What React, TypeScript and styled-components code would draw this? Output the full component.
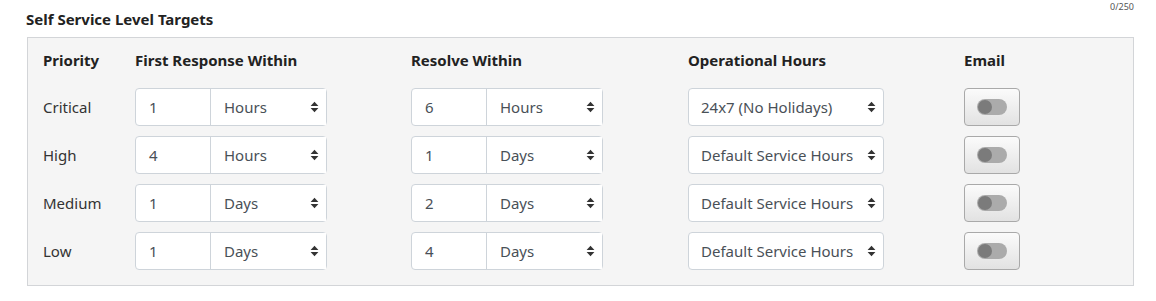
import React from "react";
import styled, { createGlobalStyle } from "styled-components";

const Global = createGlobalStyle`
  html, body { margin: 0; padding: 0; background: #fff; }
  body { font-family: "Segoe UI", "Noto Sans", "Open Sans", sans-serif; color: #212529; }
  * { box-sizing: border-box; }
`;

const Page = styled.div`
  width: 1156px;
  height: 301px;
  padding: 0 22px 0 27px;
`;

const TopBar = styled.div`
  display: flex;
  justify-content: space-between;
  align-items: flex-start;
  height: 37px;
`;

const Title = styled.h3`
  margin: 8px 0 0 -1px;
  font-size: 15px;
  line-height: 22px;
  font-weight: 700;
  color: #222;
`;

const Counter = styled.span`
  margin-top: 1px;
  font-size: 9px;
  line-height: 11px;
  color: #555;
`;

const Panel = styled.div`
  background: #f5f5f5;
  border: 1px solid #d3d5d8;
  padding: 11px 16px 15px 15px;
  display: grid;
  grid-template-columns: 92px 276px 277px 276px 1fr;
  row-gap: 10px;
  align-items: center;
`;

const HeadCell = styled.div`
  font-size: 15px;
  line-height: 22px;
  font-weight: 700;
  color: #222;
  padding-bottom: 7px;
`;

const Label = styled.div`
  font-size: 15px;
  line-height: 22px;
  color: #333;
`;

const Group = styled.div`
  display: flex;
  width: 192px;
  height: 38px;
  background: #fff;
  border: 1px solid #ced4da;
  border-radius: 4px;
`;

const NumberInput = styled.div`
  width: 75px;
  border-right: 1px solid #ced4da;
  padding: 0 13px;
  display: flex;
  align-items: center;
  font-size: 15px;
  color: #495057;
`;

const SelectBox = styled.div<{ $width?: number; $bordered?: boolean }>`
  position: relative;
  flex: 1;
  display: flex;
  align-items: center;
  padding: 0 12px 0 13px;
  font-size: 15px;
  color: #495057;
  background: #fff;
  ${(p) =>
    p.$bordered
      ? `width: ${p.$width}px; flex: none; height: 38px; border: 1px solid #ced4da; border-radius: 4px; padding-left: 12px;`
      : ""}
`;

const Arrows = styled.svg`
  position: absolute;
  right: 7px;
  top: 50%;
  transform: translateY(-50%);
`;

const Caret = () => (
  <Arrows width="9" height="12" viewBox="0 0 9 12">
    <path d="M4.5 0.8 L8.4 5 H0.6 Z" fill="#333" />
    <path d="M4.5 11.2 L8.4 7 H0.6 Z" fill="#333" />
  </Arrows>
);

const ToggleButton = styled.button`
  width: 56px;
  height: 38px;
  padding: 0;
  border: 1px solid #a9a9a9;
  border-radius: 4px;
  background: linear-gradient(#fbfbfb, #e2e2e2);
  display: flex;
  align-items: center;
  justify-content: center;
`;

const Track = styled.span`
  width: 30px;
  height: 16px;
  border-radius: 8px;
  background: #ababab;
  display: flex;
  align-items: center;
  padding-left: 1px;
`;

const Knob = styled.span`
  width: 14px;
  height: 14px;
  border-radius: 50%;
  background: #7b7b7b;
`;

type Row = {
  priority: string;
  first: [string, string];
  resolve: [string, string];
  hours: string;
};

const rows: Row[] = [
  { priority: "Critical", first: ["1", "Hours"], resolve: ["6", "Hours"], hours: "24x7 (No Holidays)" },
  { priority: "High", first: ["4", "Hours"], resolve: ["1", "Days"], hours: "Default Service Hours" },
  { priority: "Medium", first: ["1", "Days"], resolve: ["2", "Days"], hours: "Default Service Hours" },
  { priority: "Low", first: ["1", "Days"], resolve: ["4", "Days"], hours: "Default Service Hours" },
];

const Duration = ({ value }: { value: [string, string] }) => (
  <Group>
    <NumberInput>{value[0]}</NumberInput>
    <SelectBox>
      {value[1]}
      <Caret />
    </SelectBox>
  </Group>
);

export default function App() {
  return (
    <Page>
      <Global />
      <TopBar>
        <Title>Self Service Level Targets</Title>
        <Counter>0/250</Counter>
      </TopBar>
      <Panel>
        <HeadCell>Priority</HeadCell>
        <HeadCell>First Response Within</HeadCell>
        <HeadCell>Resolve Within</HeadCell>
        <HeadCell>Operational Hours</HeadCell>
        <HeadCell>Email</HeadCell>
        {rows.map((r) => (
          <React.Fragment key={r.priority}>
            <Label>{r.priority}</Label>
            <Duration value={r.first} />
            <Duration value={r.resolve} />
            <SelectBox $bordered $width={196}>
              {r.hours}
              <Caret />
            </SelectBox>
            <div>
              <ToggleButton type="button">
                <Track>
                  <Knob />
                </Track>
              </ToggleButton>
            </div>
          </React.Fragment>
        ))}
      </Panel>
    </Page>
  );
}
